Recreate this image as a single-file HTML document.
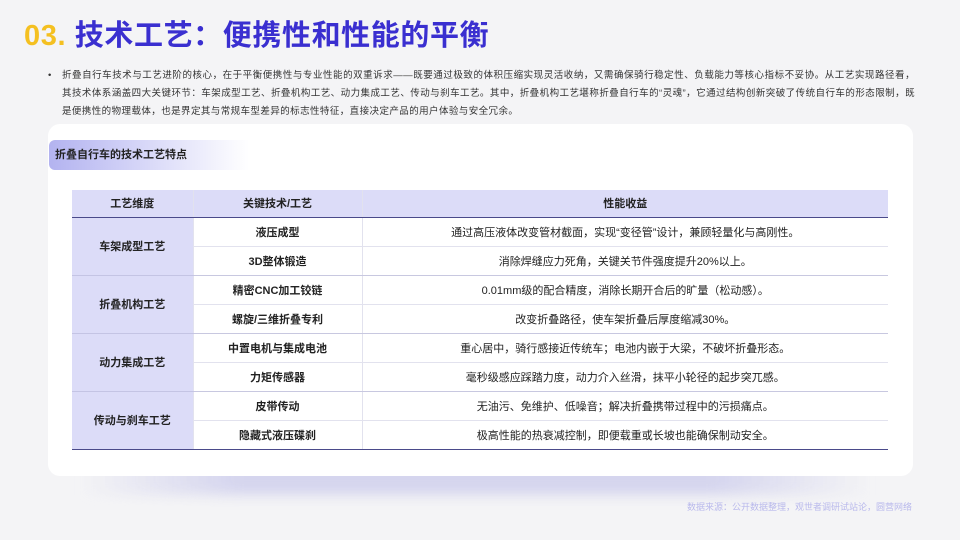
<!DOCTYPE html>
<html><head><meta charset="utf-8"><style>
*{margin:0;padding:0;box-sizing:border-box}
body{width:960px;height:540px;overflow:hidden;background:#f4f4f6;font-family:"Liberation Sans","Noto Sans CJK SC",sans-serif;position:relative;color:#222}
.title{position:absolute;left:24px;top:12px;font-size:29px;font-weight:700;color:#3a2fd0;letter-spacing:0.6px;white-space:nowrap}
.title span{color:#f4c021}
.para{position:absolute;left:62px;top:67px;width:853px;font-size:9.5px;line-height:18px;color:#333;letter-spacing:0.42px;text-align:justify}
.para:before{content:"•";position:absolute;left:-14px;top:0}
.shadow{position:absolute;left:80px;top:455px;width:790px;height:40px;background:linear-gradient(90deg,rgba(200,200,235,0),rgba(200,200,235,.7) 20%,rgba(200,200,235,.7) 80%,rgba(200,200,235,0));filter:blur(6px)}
.card{position:absolute;left:48px;top:124px;width:865px;height:352px;background:#fff;border-radius:12px}
.tag{position:absolute;left:49px;top:140px;width:200px;height:30px;border-radius:6px 0 0 6px;background:linear-gradient(90deg,#b3b3f0,#d9d9f8 50%,rgba(255,255,255,0));font-size:11px;font-weight:700;line-height:30px;padding-left:6px;color:#222}
table{position:absolute;left:72px;top:190px;width:816px;border-collapse:collapse;font-size:11px;text-align:center}
td,th{height:29px;border-bottom:1px solid #e2e2ee;border-right:1px solid #e2e2ee}
th{height:27px;background:#dcdcf8;font-weight:700;border-bottom:1.5px solid #4a4a8a}
td.c{background:#dcdcf8;font-weight:700;border-bottom:1px solid #c4c4e4}
tr.g td{border-bottom-color:#c8c8e0}
td.k{font-weight:700}
tr:last-child td,td.last{border-bottom:1.5px solid #4a4a8a!important}
td:last-child,th:last-child{border-right:none}
.foot{position:absolute;right:48px;top:500px;font-size:9px;color:#b9b9ec}
</style></head><body>
<div class="title"><span>03.</span> 技术工艺：便携性和性能的平衡</div>
<div class="para">折叠自行车技术与工艺进阶的核心，在于平衡便携性与专业性能的双重诉求——既要通过极致的体积压缩实现灵活收纳，又需确保骑行稳定性、负载能力等核心指标不妥协。从工艺实现路径看，其技术体系涵盖四大关键环节：车架成型工艺、折叠机构工艺、动力集成工艺、传动与刹车工艺。其中，折叠机构工艺堪称折叠自行车的“灵魂”，它通过结构创新突破了传统自行车的形态限制，既是便携性的物理载体，也是界定其与常规车型差异的标志性特征，直接决定产品的用户体验与安全冗余。</div>
<div class="shadow"></div>
<div class="card"></div>
<div class="tag">折叠自行车的技术工艺特点</div>
<table>
<tr><th style="width:121px">工艺维度</th><th style="width:169px">关键技术/工艺</th><th>性能收益</th></tr>
<tr><td class="c" rowspan="2">车架成型工艺</td><td class="k">液压成型</td><td>通过高压液体改变管材截面，实现“变径管”设计，兼顾轻量化与高刚性。</td></tr>
<tr class="g"><td class="k">3D整体锻造</td><td>消除焊缝应力死角，关键关节件强度提升20%以上。</td></tr>
<tr><td class="c" rowspan="2">折叠机构工艺</td><td class="k">精密CNC加工铰链</td><td>0.01mm级的配合精度，消除长期开合后的旷量（松动感）。</td></tr>
<tr class="g"><td class="k">螺旋/三维折叠专利</td><td>改变折叠路径，使车架折叠后厚度缩减30%。</td></tr>
<tr><td class="c" rowspan="2">动力集成工艺</td><td class="k">中置电机与集成电池</td><td>重心居中，骑行感接近传统车；电池内嵌于大梁，不破坏折叠形态。</td></tr>
<tr class="g"><td class="k">力矩传感器</td><td>毫秒级感应踩踏力度，动力介入丝滑，抹平小轮径的起步突兀感。</td></tr>
<tr><td class="c last" rowspan="2">传动与刹车工艺</td><td class="k">皮带传动</td><td>无油污、免维护、低噪音；解决折叠携带过程中的污损痛点。</td></tr>
<tr><td class="k">隐藏式液压碟刹</td><td>极高性能的热衰减控制，即便载重或长坡也能确保制动安全。</td></tr>
</table>
<div class="foot">数据来源：公开数据整理，观世者调研试站论，圆营网络</div>
</body></html>
